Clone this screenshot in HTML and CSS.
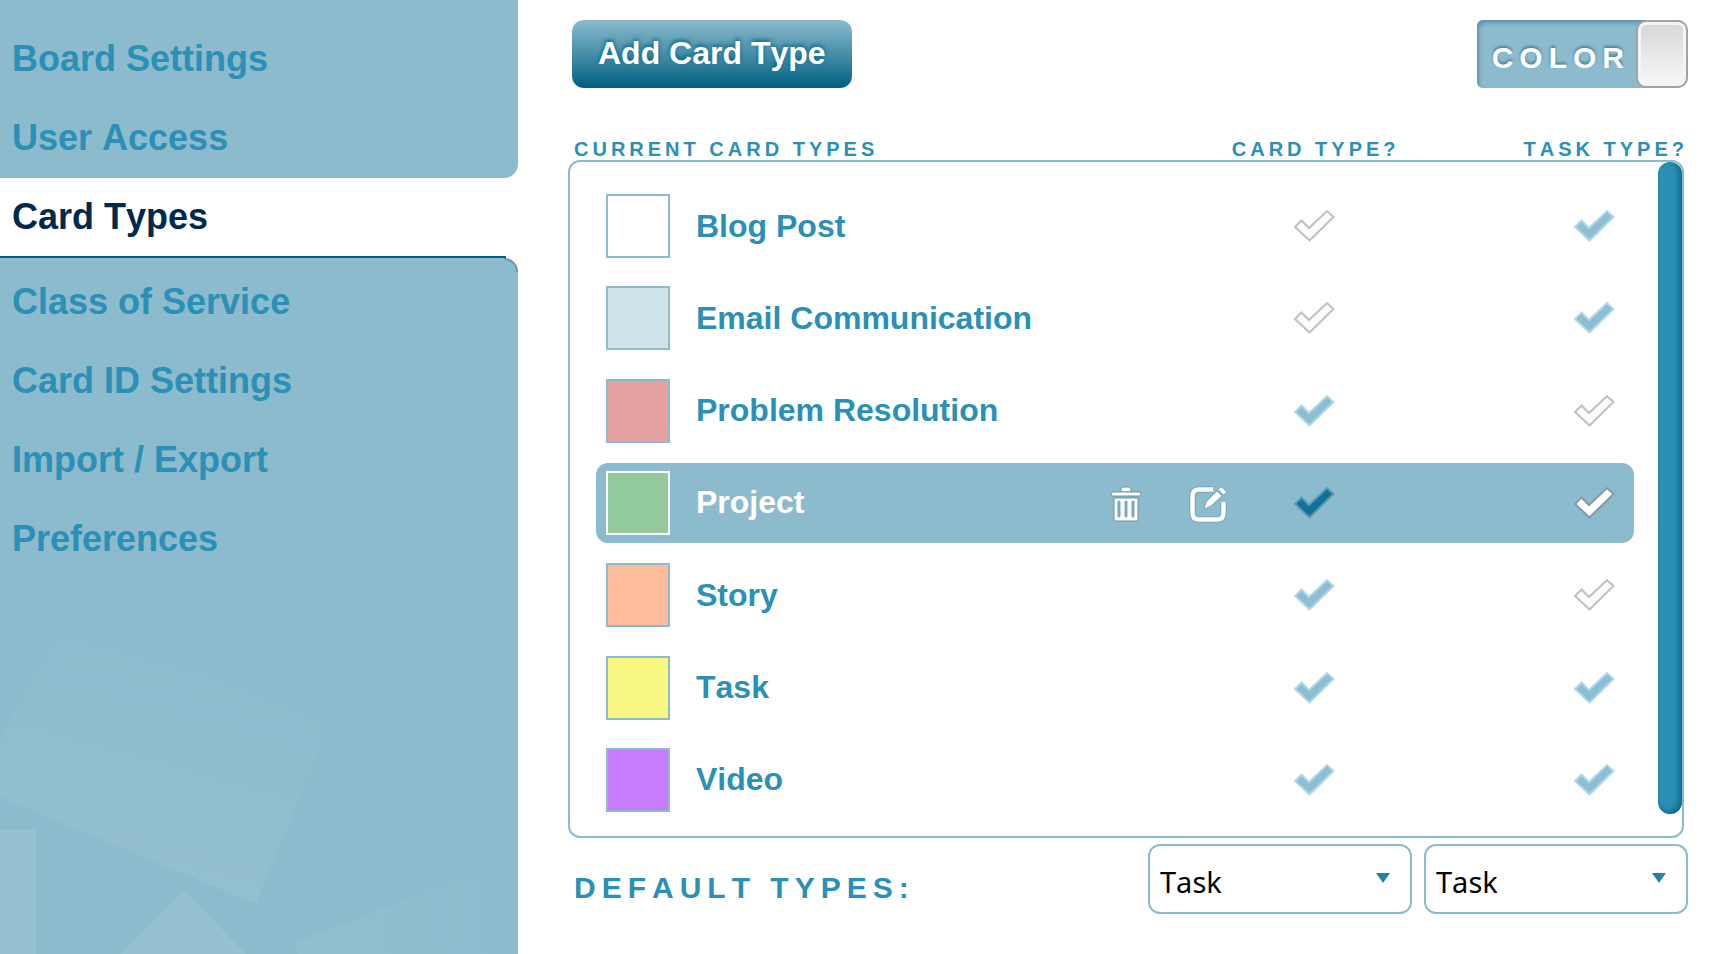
FILE: index.html
```html
<!DOCTYPE html>
<html lang="en">
<head>
<meta charset="utf-8">
<title>Card Types</title>
<link rel="stylesheet" href="styles.css">
</head>
<body>
<svg class="sprite" aria-hidden="true">
  <symbol id="check" viewBox="0 0 42 34">
    <path d="M2 18 8.500 11.500 16 19 34 2 40.500 8 16.500 31.500Z"/>
  </symbol>
</svg>
<div class="layout">
  <nav class="sidebar">
    <svg class="sidebar-art" viewBox="0 0 518 354" aria-hidden="true">
      <defs>
        <linearGradient id="fade" x1="0.65" y1="0" x2="0.35" y2="1">
          <stop offset="0.1" stop-color="#fff" stop-opacity="0"/>
          <stop offset="1" stop-color="#fff" stop-opacity="0.09"/>
        </linearGradient>
        <linearGradient id="fade-right" x1="0" y1="0" x2="1" y2="0">
          <stop offset="0" stop-color="#fff" stop-opacity="0.07"/>
          <stop offset="1" stop-color="#fff" stop-opacity="0"/>
        </linearGradient>
      </defs>
      <path fill="url(#fade)" d="M68 8 329 125 256 304 0 197V143Z"/>
      <path fill="#fff" fill-opacity="0.09" d="M0 229H36V354H0ZM184 290 246 354H121Z"/>
      <path fill="url(#fade-right)" d="M293 343 476 272 518 340V354H298Z"/>
    </svg>
    <ul class="nav-group nav-group-top">
      <li><a href="#board">Board Settings</a></li>
      <li><a href="#access">User Access</a></li>
    </ul>
    <ul class="nav-group nav-group-current">
      <li><a href="#types" aria-current="page">Card Types</a></li>
    </ul>
    <ul class="nav-group nav-group-rest">
      <li><a href="#service">Class of Service</a></li>
      <li><a href="#ids">Card ID Settings</a></li>
      <li><a href="#import">Import / Export</a></li>
      <li><a href="#preferences">Preferences</a></li>
    </ul>
  </nav>

  <main class="main">
    <div class="toolbar">
      <button class="add-button" type="button">Add Card Type</button>
      <button class="toggle" type="button" role="switch" aria-checked="true"><span class="toggle-text">COLOR</span><span class="knob"></span></button>
    </div>

    <div class="headings">
      <span class="heading-name">CURRENT CARD TYPES</span>
      <span id="h-card">CARD TYPE?</span>
      <span id="h-task">TASK TYPE?</span>
    </div>

    <div class="list">
      <table class="types">
        <tbody>
          <tr>
            <td class="cell-swatch"><div class="swatch white"></div></td>
            <td class="cell-name">Blog Post</td>
            <td class="cell-actions"></td>
            <td class="cell-card"><label class="tick"><input type="checkbox" aria-labelledby="h-card"><svg><use href="#check"/></svg></label></td>
            <td class="cell-task"><label class="tick"><input type="checkbox" aria-labelledby="h-task" checked><svg><use href="#check"/></svg></label></td>
          </tr>
          <tr>
            <td class="cell-swatch"><div class="swatch pale"></div></td>
            <td class="cell-name">Email Communication</td>
            <td class="cell-actions"></td>
            <td class="cell-card"><label class="tick"><input type="checkbox" aria-labelledby="h-card"><svg><use href="#check"/></svg></label></td>
            <td class="cell-task"><label class="tick"><input type="checkbox" aria-labelledby="h-task" checked><svg><use href="#check"/></svg></label></td>
          </tr>
          <tr>
            <td class="cell-swatch"><div class="swatch red"></div></td>
            <td class="cell-name">Problem Resolution</td>
            <td class="cell-actions"></td>
            <td class="cell-card"><label class="tick"><input type="checkbox" aria-labelledby="h-card" checked><svg><use href="#check"/></svg></label></td>
            <td class="cell-task"><label class="tick"><input type="checkbox" aria-labelledby="h-task"><svg><use href="#check"/></svg></label></td>
          </tr>
          <tr class="selected">
            <td class="cell-swatch"><div class="swatch green"></div></td>
            <td class="cell-name">Project</td>
            <td class="cell-actions">
              <div class="actions">
                <button class="icon-button" type="button" aria-label="Delete">
                  <svg viewBox="0 0 42 42">
                    <g fill="#fff" stroke="#6a94a5" stroke-width="1">
                      <rect x="16" y="5" width="10" height="5" rx="2"/>
                      <rect x="6" y="10" width="30" height="4" rx="2"/>
                      <path d="M9 16H33V37Q33 39 31 39H11Q9 39 9 37Z"/>
                    </g>
                    <path d="M14 20V34M21 20V34M28 20V34" stroke="#7ba9bb" stroke-width="3" stroke-linecap="round"/>
                  </svg>
                </button>
                <button class="icon-button" type="button" aria-label="Edit">
                  <svg viewBox="0 0 42 42" fill="none">
                    <path d="M26 7.500H12Q5.500 7.500 5.500 14V31Q5.500 37.500 12 37.500H30Q36.500 37.500 36.500 31V20" stroke="#6f9bad" stroke-width="6"/>
                    <path d="M26 7.500H12Q5.500 7.500 5.500 14V31Q5.500 37.500 12 37.500H30Q36.500 37.500 36.500 31V20" stroke="#fff" stroke-width="4.500"/>
                    <path d="M17 27 19 20 30 9 35 14 24 24ZM31 7.500 34 4.500 40 10 36.500 13Z" fill="#fff" stroke="#7ba6b8" stroke-width="1"/>
                  </svg>
                </button>
              </div>
            </td>
            <td class="cell-card"><label class="tick"><input type="checkbox" aria-labelledby="h-card" checked><svg><use href="#check"/></svg></label></td>
            <td class="cell-task"><label class="tick"><input type="checkbox" aria-labelledby="h-task"><svg><use href="#check"/></svg></label></td>
          </tr>
          <tr>
            <td class="cell-swatch"><div class="swatch orange"></div></td>
            <td class="cell-name">Story</td>
            <td class="cell-actions"></td>
            <td class="cell-card"><label class="tick"><input type="checkbox" aria-labelledby="h-card" checked><svg><use href="#check"/></svg></label></td>
            <td class="cell-task"><label class="tick"><input type="checkbox" aria-labelledby="h-task"><svg><use href="#check"/></svg></label></td>
          </tr>
          <tr>
            <td class="cell-swatch"><div class="swatch yellow"></div></td>
            <td class="cell-name">Task</td>
            <td class="cell-actions"></td>
            <td class="cell-card"><label class="tick"><input type="checkbox" aria-labelledby="h-card" checked><svg><use href="#check"/></svg></label></td>
            <td class="cell-task"><label class="tick"><input type="checkbox" aria-labelledby="h-task" checked><svg><use href="#check"/></svg></label></td>
          </tr>
          <tr>
            <td class="cell-swatch"><div class="swatch purple"></div></td>
            <td class="cell-name">Video</td>
            <td class="cell-actions"></td>
            <td class="cell-card"><label class="tick"><input type="checkbox" aria-labelledby="h-card" checked><svg><use href="#check"/></svg></label></td>
            <td class="cell-task"><label class="tick"><input type="checkbox" aria-labelledby="h-task" checked><svg><use href="#check"/></svg></label></td>
          </tr>
        </tbody>
      </table>
      <div class="scrollbar"></div>
    </div>

    <div class="defaults">
      <span class="defaults-label" id="defaults">DEFAULT TYPES:</span>
      <div class="picker">
        <select aria-labelledby="defaults h-card"><option>Task</option></select>
        <svg class="arrow" viewBox="0 0 14 10" aria-hidden="true"><path d="M0 0H14L7 10Z"/></svg>
      </div>
      <div class="picker">
        <select aria-labelledby="defaults h-task"><option>Task</option></select>
        <svg class="arrow" viewBox="0 0 14 10" aria-hidden="true"><path d="M0 0H14L7 10Z"/></svg>
      </div>
    </div>
  </main>
</div>
</body>
</html>
```
FILE: styles.css
```css
:root {
  --pale: #8bbbcd;
  --blue: #2b90b5;
  --deep: #056083;
}

* {
  box-sizing: border-box;
}

body {
  margin: 0;
  background: #fff;
  color: var(--blue);
  font-family: "Liberation Sans", Arial, sans-serif;
  font-weight: bold;
  font-kerning: none;
}

button,
select {
  margin: 0;
  font: inherit;
  font-kerning: none;
}

.sprite {
  display: none;
}

.layout {
  display: flex;
  min-height: 100vh;
}

/* Sidebar */
.sidebar {
  position: relative;
  display: flex;
  flex: none;
  flex-direction: column;
  width: 518px;
}

.sidebar-art {
  position: absolute;
  z-index: 1;
  bottom: 0;
  left: 0;
  width: 100%;
  pointer-events: none;
}

.nav-group {
  margin: 0;
  padding: 0;
  list-style: none;
}

.nav-group a {
  display: block;
  padding: 1px 12px 2px;
  color: var(--blue);
  font-size: 36px;
  line-height: 76px;
  text-decoration: none;
}

.nav-group-top {
  padding-top: 20px;
  border-bottom-right-radius: 14px;
  background: var(--pale);
}

.nav-group-current {
  padding-bottom: 1px;
  background: linear-gradient(var(--deep), var(--deep)) left bottom / 506px 2px no-repeat;
}

.nav-group-current a {
  color: #00294d;
}

.nav-group-rest {
  flex: 1;
  padding-top: 5px;
  border-top-right-radius: 14px;
  background: radial-gradient(circle at 0 14px, transparent 11px, #4f7c8d 15px) right top / 14px 14px no-repeat var(--pale);
}

/* Main column */
.main {
  flex: 1;
  padding: 20px 22px 20px 50px;
}

.toolbar {
  display: flex;
  justify-content: space-between;
  padding-left: 4px;
}

.add-button {
  height: 68px;
  padding: 0 26px 2px;
  border: 0;
  border-radius: 12px;
  background: linear-gradient(#8bbbcd, #3f8aa5 55%, #005f83);
  color: #fff;
  font-size: 32px;
  text-shadow: 0 -2px 4px var(--deep);
}

.toggle {
  display: flex;
  align-items: center;
  height: 68px;
  padding: 0 0 0 15px;
  border: 0;
  border-radius: 6px 12px 12px 6px;
  background: var(--pale);
  box-shadow: inset 2px 3px 4px #5e92ac;
  color: #fff;
  font-size: 30px;
}

.toggle-text {
  padding: 8px 6px 0 0;
  letter-spacing: 6px;
  text-shadow: 0 -2px 3px #4b7e92;
}

.knob {
  width: 52px;
  height: 68px;
  border: 2px solid #a3a3a3;
  border-radius: 10px;
  background: linear-gradient(#d6d6d6, #f8f8f8);
  box-shadow: inset 0 0 0 3px #f4f4f4;
}

.headings {
  display: flex;
  gap: 124px;
  margin-top: 50px;
  padding-left: 6px;
  font-size: 20px;
  line-height: 22px;
  letter-spacing: 4px;
}

.heading-name {
  flex: 1;
}

.list {
  display: flex;
  gap: 24px;
  margin-right: 4px;
  padding-left: 26px;
  border: 2px solid var(--pale);
  border-radius: 12px;
}

.scrollbar {
  flex: none;
  width: 24px;
  margin-bottom: 22px;
  border-radius: 12px;
  background: var(--blue);
  box-shadow: inset -3px -2px 6px #0b6587;
}

.types {
  flex: 1;
  height: 658px;
  margin: 12px 0 4px;
  border-collapse: separate;
  border-spacing: 0 12px;
  font-size: 32px;
}

.types td {
  height: 80px;
  padding: 0;
}

.types .cell-swatch {
  width: 100px;
  padding-left: 10px;
}

.types .cell-actions {
  width: 149px;
}

.types .cell-card {
  width: 300px;
  padding-right: 180px;
}

.types .cell-task {
  width: 80px;
}

.selected td {
  background: var(--pale);
  color: #fff;
}

.selected td:first-child {
  border-radius: 12px 0 0 12px;
}

.selected td:last-child {
  border-radius: 0 12px 12px 0;
}

.swatch {
  width: 64px;
  height: 64px;
  border: 2px solid var(--pale);
}

.selected .swatch {
  border-color: #fff;
}

.white { background: #fff; }
.pale { background: #cfe3ea; }
.red { background: #e5a2a3; }
.green { background: #93cb9f; }
.orange { background: #fdbd9c; }
.yellow { background: #f8f883; }
.purple { background: #c77dfb; }

.actions {
  display: flex;
  gap: 40px;
}

.icon-button {
  width: 42px;
  height: 42px;
  padding: 0;
  border: 0;
  background: none;
}

.icon-button svg {
  display: block;
}

.tick {
  display: grid;
  justify-content: center;
}

.tick input,
.tick svg {
  grid-area: 1 / 1;
  width: 42px;
  height: 34px;
  margin: 0;
}

.tick input {
  appearance: none;
}

.tick svg {
  fill: #fcfcfc;
  stroke: #c0c0c0;
  stroke-width: 2px;
  pointer-events: none;
}

.tick input:checked + svg {
  fill: #8bbfd6;
  stroke: #b4d8e6;
}

.selected .tick svg {
  fill: #fff;
  stroke: #7f9ca8;
}

.selected .tick input:checked + svg {
  fill: #12709a;
  stroke: #5a9bb6;
}

/* Default types */
.defaults {
  display: flex;
  gap: 12px;
  align-items: center;
  margin-top: 6px;
  padding-left: 6px;
}

.defaults-label {
  flex: 1;
  padding-top: 18px;
  font-size: 30px;
  letter-spacing: 6px;
}

.picker {
  position: relative;
  width: 264px;
}

.picker select {
  display: block;
  width: 100%;
  height: 70px;
  padding: 4px 40px 0 10px;
  border: 2px solid var(--pale);
  border-radius: 12px;
  appearance: none;
  background: #fff;
  color: #000;
  font-family: "Noto Sans", sans-serif;
  font-size: 29px;
  font-weight: normal;
}

.arrow {
  position: absolute;
  top: 29px;
  right: 22px;
  width: 14px;
  height: 10px;
  fill: #2482a8;
  pointer-events: none;
}
```
